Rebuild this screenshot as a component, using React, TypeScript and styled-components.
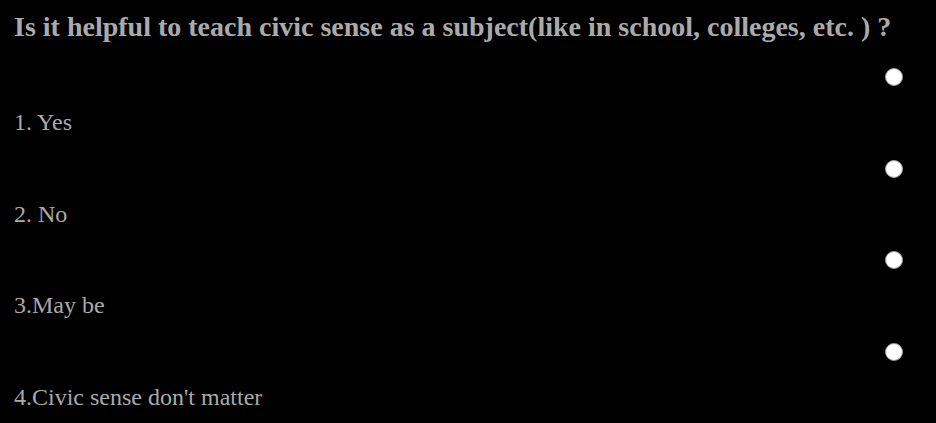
import React from "react";
import styled, { createGlobalStyle } from "styled-components";

const Global = createGlobalStyle`
  html, body { margin: 0; padding: 0; background: #000; }
  body { font-family: "Liberation Serif", "Times New Roman", serif; color: #aaaaaa; }
`;

const Page = styled.div`
  padding: 11px 33px 0 14px;
  background: #000;
  min-height: 423px;
  box-sizing: border-box;
`;

const Question = styled.h2`
  margin: 0;
  font-size: 28px;
  font-weight: bold;
  line-height: 32px;
  color: #aaaaaa;
`;

const Options = styled.div`
  display: flex;
  flex-direction: column;
  margin-top: 25px;
`;

const Option = styled.label`
  display: flex;
  flex-direction: column;
  height: 91.67px;
`;

const RadioRow = styled.div`
  display: flex;
  justify-content: flex-end;
`;

const Radio = styled.input.attrs({ type: "radio" })`
  appearance: none;
  margin: 0;
  width: 18px;
  height: 18px;
  border-radius: 50%;
  background: #fff;
  border: 1px solid #9a9a9a;
  box-sizing: border-box;
`;

const OptionText = styled.span`
  margin-top: 22px;
  font-size: 24px;
  line-height: 28px;
  color: #aaaaaa;
`;

const options = ["1. Yes", "2. No", "3.May be", "4.Civic sense don't matter"];

export default function App() {
  return (
    <>
      <Global />
      <Page>
        <Question>
          Is it helpful to teach civic sense as a subject(like in school, colleges, etc. ) ?
        </Question>
        <Options>
          {options.map((o) => (
            <Option key={o}>
              <RadioRow>
                <Radio name="civic" />
              </RadioRow>
              <OptionText>{o}</OptionText>
            </Option>
          ))}
        </Options>
      </Page>
    </>
  );
}
